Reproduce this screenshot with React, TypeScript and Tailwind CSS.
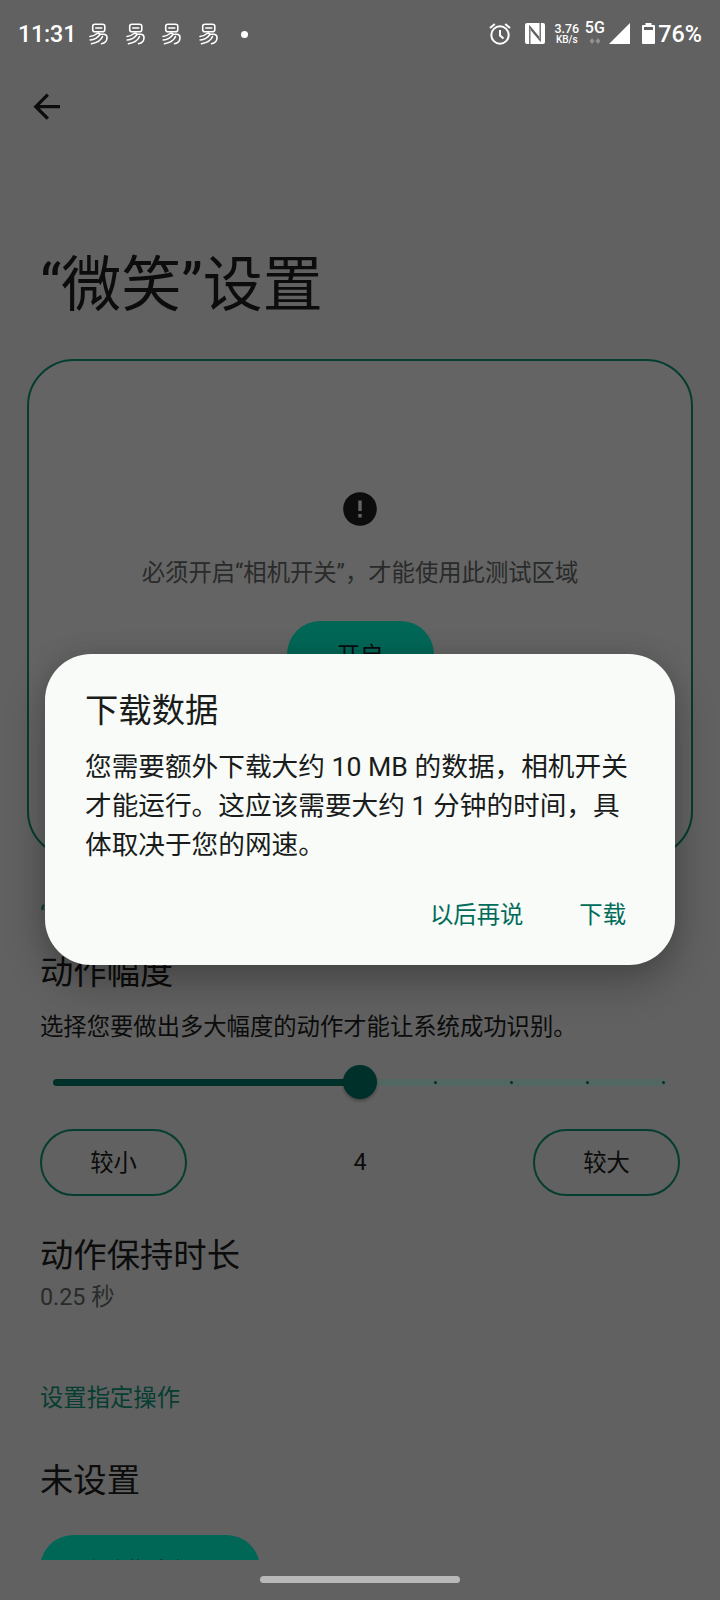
const statusIcons = [0, 1, 2, 3]
const ticks = [0, 1, 2, 3, 4]

function NoticeIcon() {
  return (
    <svg width="20" height="22" viewBox="0 0 20 22" fill="none" stroke="white" strokeWidth="1.6" strokeLinecap="round" strokeLinejoin="round">
      <path d="M6 1.200h7.500q2.300 0 2.300 2v3.600q0 2-2.300 2H6q-2.300 0-2.300-2V3.200q0-2 2.300-2Z" />
      <path d="M6.800 5h6" />
      <path d="M1 13.500Q5 13 8 10.500Q9.500 9.500 11 11.200h3.500q3.500 0 3.500 3.300 0 5.500-5.500 6.200M1.200 17Q7.500 16.500 11 11.500M2.500 20.800Q11.500 19 13.500 13.500" />
    </svg>
  )
}

function AlarmIcon() {
  return (
    <svg width="22" height="22" viewBox="0 0 22 22" fill="none" stroke="white" strokeWidth="2">
      <circle cx="11" cy="12" r="8.700" />
      <path d="M11 7v5.500l3.500 3M1 5 5.800 1M21 5l-4.800-4" />
    </svg>
  )
}

function NfcIcon() {
  return (
    <svg width="20" height="21" viewBox="0 0 20 21">
      <rect width="20" height="21" rx="2" fill="white" />
      <path d="M4.800 21V3.500L14 14.500M15.200 0v17.500L6 6.500" fill="none" stroke="#616161" strokeWidth="1.300" />
    </svg>
  )
}

function StatusBar() {
  return (
    <div className="relative z-20 h-[68px] shrink-0 text-white">
      <div className="flex h-[68px] items-center pl-[18px] pr-[18px]">
        <span className="w-[71px] pt-[1px] text-[23.330px] font-medium leading-none tracking-[-0.2px]">11:31</span>
        <div className="flex gap-[16.500px]">
          {statusIcons.map((i) => (
            <NoticeIcon key={i} />
          ))}
        </div>
        <span className="ml-[22px] h-[7px] w-[7px] rounded-full bg-white" />
        <div className="ml-auto flex items-center">
          <AlarmIcon />
          <span className="w-[14px]" />
          <NfcIcon />
          <div className="ml-[9px] flex w-[25px] flex-col items-center font-medium leading-none">
            <span className="text-[12.500px]">3.76</span>
            <span className="text-[10px]">KB/s</span>
          </div>
          <div className="ml-[5px] flex w-[21px] flex-col items-center">
            <span className="mb-[3px] mt-[-2px] text-[16px] font-medium leading-[14px]">5G</span>
            <svg width="12" height="6" viewBox="0 0 12 6" fill="#919191">
              <path d="M3 0l2.500 3L3 6 .5 3ZM9 0l2.500 3L9 6 6.500 3Z" />
            </svg>
          </div>
          <svg className="ml-[4px]" width="21" height="21" viewBox="0 0 21 21" fill="white">
            <path d="M21 0v21H0Z" />
          </svg>
          <svg className="ml-[12px]" width="13" height="21" viewBox="0 0 13 21">
            <path d="M3.500 0h6v2H12Q13 2 13 3v17q0 1-1 1H1Q0 21 0 20V3Q0 2 1 2h2.500Z" fill="white" />
            <path d="M2 4h9v3H2Z" fill="#616161" />
          </svg>
          <span className="ml-[3px] pt-[1px] text-[23.330px] font-medium leading-none">76%</span>
        </div>
      </div>
    </div>
  )
}

function Slider() {
  return (
    <div className="relative mx-[13px] mt-[21px] flex h-[34px] items-center">
      <div className="h-[7px] w-[307px] rounded-l-full bg-[#00302a]" />
      <div className="h-[7px] flex-1 rounded-r-full bg-[#526761]" />
      <div className="absolute left-[305.500px] flex w-[307px] justify-between pr-[1px]">
        {ticks.map((i) => (
          <span key={i} className="h-[3px] w-[3px] rounded-full bg-[#0c2b26]" />
        ))}
      </div>
      <div className="absolute left-[290px] h-[34px] w-[34px] rounded-full bg-[#00302a] shadow-[0_2px_3px_rgba(0,0,0,0.3)]" />
    </div>
  )
}

function OutlineButton({ label }: { label: string }) {
  return (
    <button className="h-[67px] w-[147px] rounded-full border-2 border-[#063d31] pt-[2px] text-[23.330px] text-[#0b0c0b]">
      {label}
    </button>
  )
}

function DownloadDialog() {
  return (
    <div className="absolute left-[45px] top-[654px] z-10 h-[311px] w-[630px] rounded-[46px] bg-[#f8fbf8] px-[40px] pt-[34px] text-[#191c1b] shadow-[0_18px_40px_rgba(0,0,0,0.25),0_0_24px_rgba(0,0,0,0.1)]">
      <h2 className="text-[33.330px] leading-[46px]">下载数据</h2>
      <p className="mt-[14px] w-[550px] text-[26.670px] leading-[39px]">
        您需要额外下载大约 10 MB 的数据，相机开关
        <br />
        才能运行。这应该需要大约 1 分钟的时间，具
        <br />
        体取决于您的网速。
      </p>
      <div className="mt-[33px] flex justify-end gap-[56px] pr-[9px] text-[23.330px] leading-[34px] text-[#006b5a]">
        <button>以后再说</button>
        <button>下载</button>
      </div>
    </div>
  )
}

export default function App() {
  return (
    <div className="relative h-[1600px] w-[720px] overflow-hidden bg-[#616161] font-['Roboto','Noto_Sans_CJK_SC',sans-serif] text-[#0b0c0b]">
      <StatusBar />
      <div className="flex h-[1492px] flex-col overflow-hidden">
        <svg className="ml-[33px] mt-[25px] shrink-0" width="28" height="28" viewBox="0 0 28 28" fill="none" stroke="#0b0c0b" strokeWidth="3.300">
          <path d="M27 13.700H3M14.800 1.700 2.800 13.700l12 12" />
        </svg>
        <h1 className="ml-[40px] mt-[121px] text-[60px] leading-[88px]">“微笑”设置</h1>

        <section className="mx-[27px] mt-[29px] flex h-[499px] shrink-0 flex-col items-center rounded-[47px] border-2 border-[#063d31] bg-[#656464]">
          <svg className="mt-[131px]" width="34" height="34" viewBox="0 0 34 34">
            <circle cx="17" cy="17" r="16.800" fill="#0b0c0b" />
            <path d="M15.300 8.500h3.400v10.500h-3.400ZM15.300 22h3.400v3.400h-3.400Z" fill="#656464" />
          </svg>
          <p className="mt-[30px] text-[23.330px] leading-[34px] text-[#282b2a]">必须开启“相机开关”，才能使用此测试区域</p>
          <button className="mt-[31px] h-[67px] w-[147px] rounded-full bg-[#006757] pt-[3px] text-[23.330px]">开启</button>
        </section>

        <div className="mx-[40px] flex flex-col">
          <p className="mt-[40px] text-[23.330px] leading-[34px] text-[#063d31]">“微笑”设置</p>
          <h2 className="mt-[17px] text-[33.330px] leading-[48px]">动作幅度</h2>
          <p className="mt-[13px] text-[23.330px] leading-[34px]">选择您要做出多大幅度的动作才能让系统成功识别。</p>
          <Slider />
          <div className="mt-[30px] flex items-center justify-between">
            <OutlineButton label="较小" />
            <span className="text-[23.330px]">4</span>
            <OutlineButton label="较大" />
          </div>
          <h2 className="mt-[36px] text-[33.330px] leading-[48px]">动作保持时长</h2>
          <p className="text-[23.330px] leading-[34px] text-[#282b2a]">0.25 秒</p>
          <p className="mt-[67px] text-[23.330px] leading-[34px] text-[#063d31]">设置指定操作</p>
          <h2 className="mt-[42px] text-[33.330px] leading-[48px]">未设置</h2>
          <button className="mt-[30px] h-[67px] w-[220px] rounded-full bg-[#006757] pt-[7px] text-[23.330px]">修改指定操作</button>
        </div>
      </div>

      <DownloadDialog />
      <div className="absolute bottom-[17px] left-[260px] h-[7px] w-[200px] rounded-full bg-[#b8b8b8]" />
    </div>
  )
}
